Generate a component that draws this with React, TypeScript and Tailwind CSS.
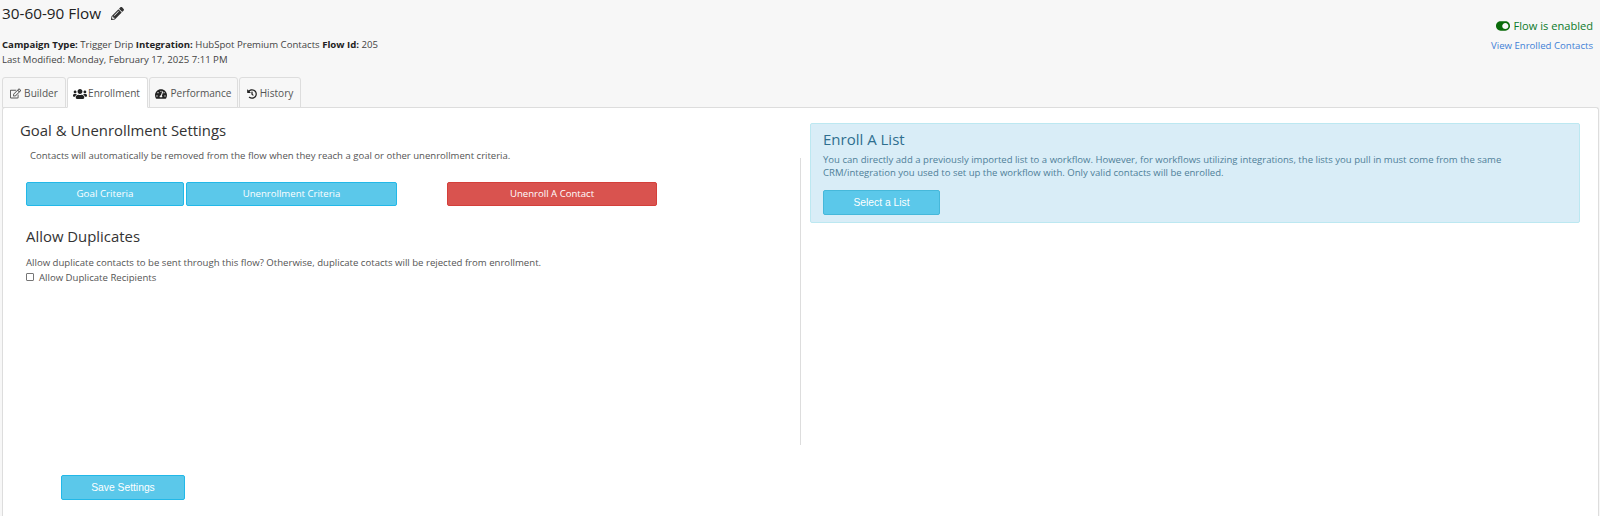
import React from "react";
import { FaPencilAlt, FaRegEdit, FaUsers, FaTachometerAlt, FaHistory, FaToggleOn } from "react-icons/fa";

const font = "font-['Open_Sans','Noto_Sans',sans-serif]";

function Tab({ icon, label, active, w, gap }: { icon: React.ReactNode; label: string; active?: boolean; w: string; gap: string }) {
  return (
    <div
      className={`${w} ${gap} h-[31px] -mb-px pt-[2px] flex items-center justify-center rounded-t-[3px] border border-[#dddddd] text-[10.1px] text-[#555555] ${
        active ? "bg-white border-b-white" : "bg-[#f7f7f7]"
      }`}
    >
      {icon}
      <span>{label}</span>
    </div>
  );
}

export default function App() {
  return (
    <div className={`${font} w-[1600px] h-[516px] overflow-hidden bg-[#f7f7f7] text-[#333333] flex flex-col`}>
      <header className="h-[77px] flex justify-between shrink-0">
        <div className="pl-[2px]">
          <div className="flex items-center gap-[10px] h-[27px] text-[15.3px] text-[#222222]">
            <span>30-60-90 Flow</span>
            <FaPencilAlt className="w-[13px] h-[13px] text-[#333333]" />
          </div>
          <div className="mt-[10px] text-[9.6px] leading-[15px] text-[#444444]">
            <div>
              <b className="text-[#222222]">Campaign Type:</b> Trigger Drip <b className="text-[#222222]">Integration:</b> HubSpot Premium Contacts{" "}
              <b className="text-[#222222]">Flow Id:</b> 205
            </div>
            <div>Last Modified: Monday, February 17, 2025 7:11 PM</div>
          </div>
        </div>
        <div className="pr-[7px] pt-[18px] flex flex-col items-end">
          <div className="flex items-center gap-[4px] text-[11.1px] leading-[16px] text-[#0b7a2a]">
            <FaToggleOn className="w-[14px] h-[14px] text-[#0a6b0a]" />
            <span>Flow is enabled</span>
          </div>
          <a className="mt-[5px] text-[9.6px] leading-[14px] text-[#3f7fd6]">View Enrolled Contacts</a>
        </div>
      </header>

      <nav className="flex gap-[1px] pl-[2px] h-[30px] shrink-0 relative z-10">
        <Tab w="w-[64px]" gap="gap-[3px]" icon={<FaRegEdit className="w-[11px] h-[11px]" />} label="Builder" />
        <Tab w="w-[81px]" gap="gap-[1px] pr-[2px]" active icon={<FaUsers className="w-[14px] h-[14px] text-[#222222]" />} label="Enrollment" />
        <Tab w="w-[89px]" gap="gap-[3px]" icon={<FaTachometerAlt className="w-[12px] h-[12px] text-[#222222]" />} label="Performance" />
        <Tab w="w-[62px]" gap="gap-[3px]" icon={<FaHistory className="w-[10px] h-[10px] text-[#222222]" />} label="History" />
      </nav>

      <main className="ml-[2px] mr-[1px] flex-1 bg-white border border-b-0 border-[#dddddd] rounded-t-[3px] flex flex-col">
        <div className="flex h-[352px]">
          <section className="w-[797px] flex flex-col">
            <h2 className="ml-[17px] mt-[13px] text-[14.9px] leading-[18px] font-medium text-[#333333]">Goal &amp; Unenrollment Settings</h2>
            <p className="ml-[27px] mt-[10px] text-[9.55px] leading-[13px] text-[#555555]">
              Contacts will automatically be removed from the flow when they reach a goal or other unenrollment criteria.
            </p>
            <div className="ml-[23px] mt-[20px] flex">
              <button className="w-[158px] h-[24px] rounded-[2px] bg-[#5bc8ea] border border-[#22b8e8] text-white text-[9.8px]">Goal Criteria</button>
              <button className="ml-[2px] w-[211px] h-[24px] rounded-[2px] bg-[#5bc8ea] border border-[#22b8e8] text-white text-[9.6px]">Unenrollment Criteria</button>
              <button className="ml-[50px] w-[210px] h-[24px] rounded-[2px] bg-[#d9534f] border border-[#d43f3a] text-white text-[9.6px]">Unenroll A Contact</button>
            </div>
            <h2 className="ml-[23px] mt-[21px] text-[14.9px] leading-[18px] font-medium text-[#333333]">Allow Duplicates</h2>
            <p className="ml-[23px] mt-[10px] text-[9.6px] leading-[15px] text-[#555555]">
              Allow duplicate contacts to be sent through this flow? Otherwise, duplicate cotacts will be rejected from enrollment.
            </p>
            <label className="ml-[23px] flex items-center gap-[5px] text-[9.6px] leading-[15px] text-[#555555]">
              <span className="w-[8px] h-[8px] -mt-[1px] border border-[#767676] rounded-[1px] bg-white" />
              Allow Duplicate Recipients
            </label>
          </section>
          <div className="w-px h-[287px] mt-[50px] bg-[#dddddd]" />
          <section className="flex-1 pl-[9px] pr-[18px] pt-[15px]">
            <div className="h-[100px] rounded-[2px] border border-[#bce8f1] bg-[#d9edf7] pl-[12px] pt-[5px] text-[#31708f]">
              <h3 className="text-[15px] leading-[20px] font-medium text-[#2f6f8f]">Enroll A List</h3>
              <p className="mt-[4px] w-[700px] text-[9.55px] leading-[13px] text-[#4f7f99]">
                You can directly add a previously imported list to a workflow. However, for workflows utilizing integrations, the lists you pull in must come from the same CRM/integration you used to set up the workflow with. Only valid contacts will be enrolled.
              </p>
              <button className="mt-[11px] w-[117px] h-[25px] rounded-[2px] bg-[#5bc8ea] border border-[#46b8da] text-white text-[10.3px] font-['Liberation_Sans',sans-serif]">Select a List</button>
            </div>
          </section>
        </div>
        <div className="pl-[58px] pt-[13px]">
          <button className="w-[124px] h-[25px] rounded-[2px] bg-[#5bc8ea] border border-[#22b8e8] text-white text-[10.3px] font-['Liberation_Sans',sans-serif]">Save Settings</button>
        </div>
      </main>
    </div>
  );
}
